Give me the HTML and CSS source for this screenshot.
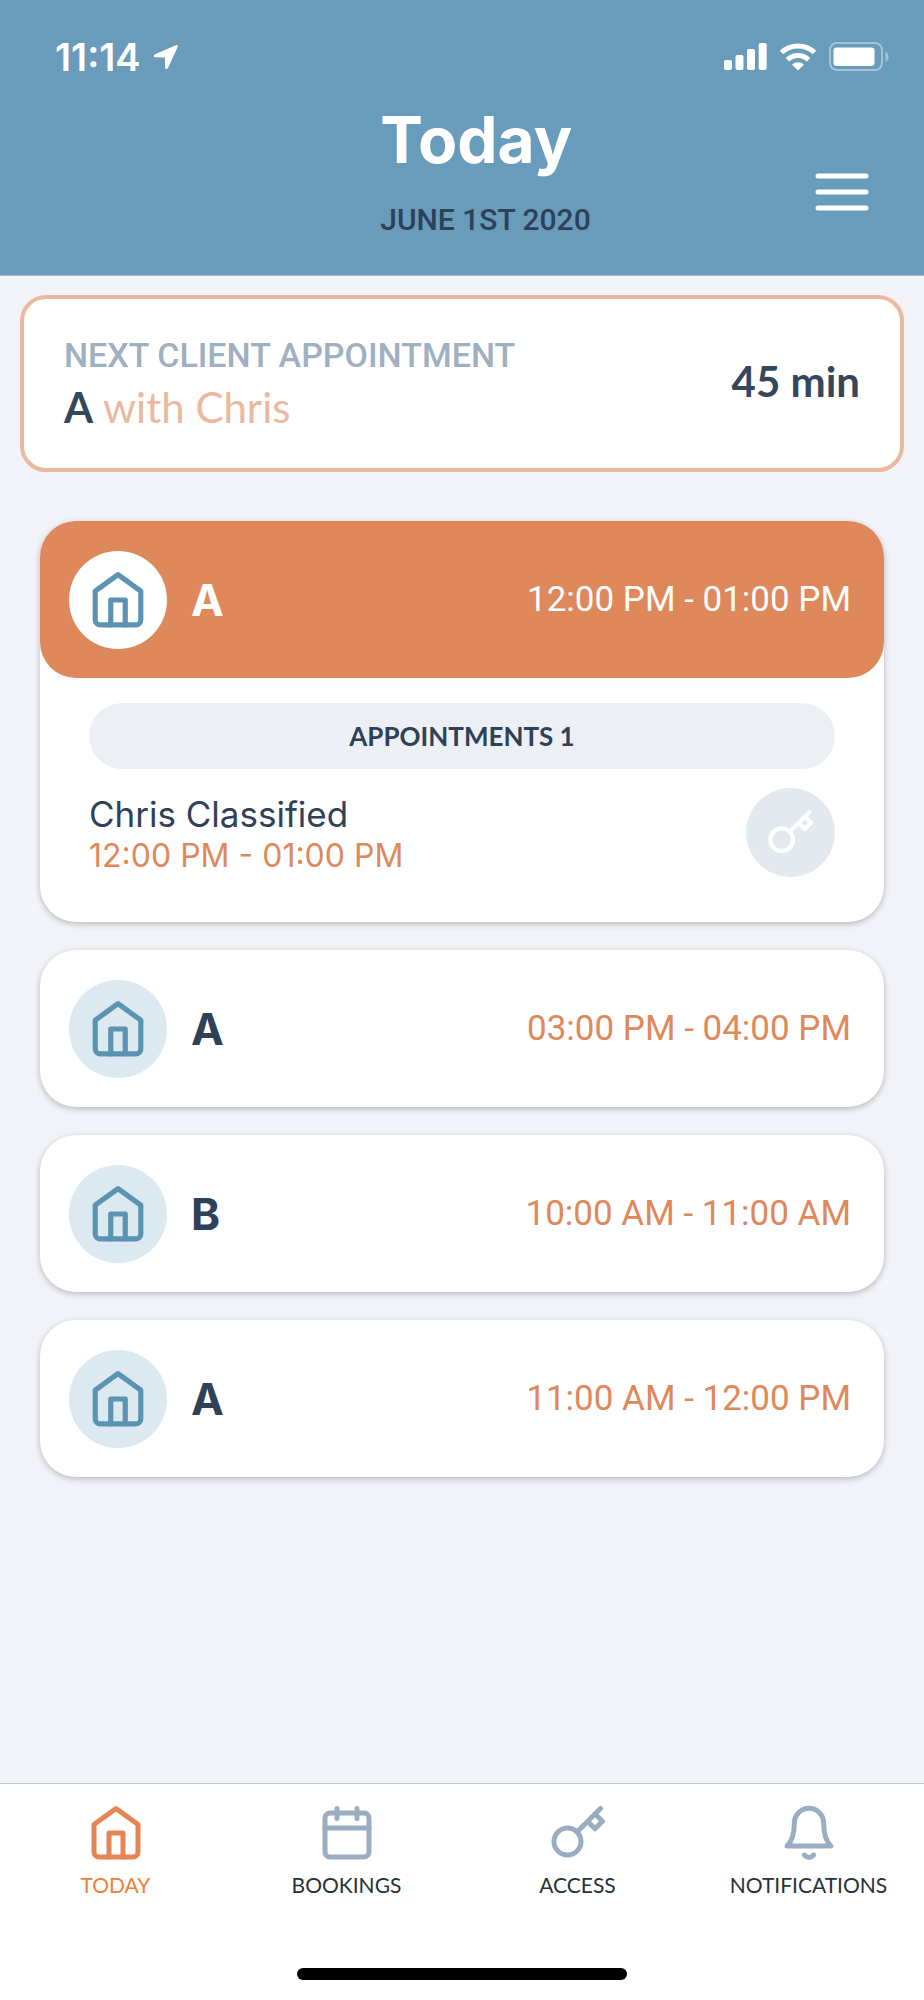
FILE: index.html
```html
<!DOCTYPE html>
<html lang="en">
<head>
    <meta charset="UTF-8">
    <meta name="viewport" content="width=device-width, initial-scale=1.0">
    <title>Today</title>
    <link rel="stylesheet" href="styles.css">
</head>
<body>
    <!-- Shared icons -->
    <svg class="icon-defs" aria-hidden="true">
        <symbol id="icon-home" viewBox="0 0 56 56">
            <path d="M28 3.5L6 19.5V47a5 5 0 0 0 5 5h34a5 5 0 0 0 5-5V19.5z"/>
            <path d="M21 52V28h14v24"/>
        </symbol>
        <symbol id="icon-calendar" viewBox="0 0 56 56">
            <rect x="6" y="8" width="44" height="44" rx="5"/>
            <path d="M6 23h44M18 3.500v10M38 3.500v10"/>
        </symbol>
        <symbol id="icon-key" viewBox="0 0 56 56">
            <circle cx="17.5" cy="36.5" r="13.5"/>
            <path d="M27 27L50.5 3.5M45 9l7.500 7.300-7.500 7.500-7.300-7.300"/>
        </symbol>
        <symbol id="icon-bell" viewBox="0 0 56 56">
            <path d="M6 41C11.500 36 13.300 29 13.300 18.500a14.700 15.200 0 0 1 29.400 0C42.700 29 44.500 36 50 41z"/>
            <path d="M23.300 50q4.700 5 9.400 0"/>
        </symbol>
    </svg>

    <header class="header">
        <div class="status-bar">
            <div class="status-left">
                <span class="clock">11:14</span>
                <svg class="location" width="26" height="26" viewBox="0 0 26 26" aria-hidden="true">
                    <path d="M23 1.200L2 10.200c-1.800.9-1.500 3 .5 3.100l9.300.3.300 9.800c.1 2 2.200 2.300 3 .4L24.700 3c.5-1.300-.4-2.300-1.700-1.800z"/>
                </svg>
            </div>
            <div class="status-right">
                <svg width="43" height="30" viewBox="0 0 43 30" aria-hidden="true">
                    <rect x="0" y="18" width="8" height="10" rx="2"/>
                    <rect x="11.5" y="13" width="8" height="15" rx="2"/>
                    <rect x="23" y="7" width="8" height="21" rx="2"/>
                    <rect x="34.7" y="1" width="8" height="27" rx="2"/>
                </svg>
                <svg width="38" height="30" viewBox="0 0 38 30" aria-hidden="true">
                    <path class="wifi-arc" d="M2.500 10.500a24 24 0 0 1 33 0M8.500 17.800a15 15 0 0 1 21 0"/>
                    <path d="M19 28.500l-6-6a9 9 0 0 1 12 0z"/>
                </svg>
                <svg width="60" height="30" viewBox="0 0 60 30" aria-hidden="true">
                    <rect class="battery-case" x="1" y="1" width="52" height="27" rx="7"/>
                    <rect x="4.5" y="5.5" width="41" height="18.5" rx="3"/>
                    <path class="battery-tip" d="M56.500 9.500c4 2.500 4 8 0 10.500z"/>
                </svg>
            </div>
        </div>
        <div class="title-bar">
            <div class="title-group">
                <h1>Today</h1>
                <p>JUNE 1ST 2020</p>
            </div>
            <button class="menu-btn" type="button" aria-label="Menu">
                <svg width="54" height="40" viewBox="0 0 54 40">
                    <path d="M3 4h48M3 20h48M3 36h48"/>
                </svg>
            </button>
        </div>
    </header>

    <main>
        <section class="next-appointment">
            <div>
                <h2>NEXT CLIENT APPOINTMENT</h2>
                <p><strong>A</strong> with Chris</p>
            </div>
            <span class="countdown">45 min</span>
        </section>

        <section class="bookings">
            <article class="card card-active">
                <div class="card-head">
                    <span class="home-badge"><svg><use href="#icon-home"/></svg></span>
                    <h3>A</h3>
                    <time>12:00 PM - 01:00 PM</time>
                </div>
                <div class="card-body">
                    <h4>APPOINTMENTS 1</h4>
                    <div class="client">
                        <div>
                            <p class="client-name">Chris Classified</p>
                            <p class="client-time">12:00 PM - 01:00 PM</p>
                        </div>
                        <button class="key-btn" type="button" aria-label="Access">
                            <svg><use href="#icon-key"/></svg>
                        </button>
                    </div>
                </div>
            </article>
            <article class="card">
                <div class="card-head">
                    <span class="home-badge"><svg><use href="#icon-home"/></svg></span>
                    <h3>A</h3>
                    <time>03:00 PM - 04:00 PM</time>
                </div>
            </article>
            <article class="card">
                <div class="card-head">
                    <span class="home-badge"><svg><use href="#icon-home"/></svg></span>
                    <h3>B</h3>
                    <time>10:00 AM - 11:00 AM</time>
                </div>
            </article>
            <article class="card">
                <div class="card-head">
                    <span class="home-badge"><svg><use href="#icon-home"/></svg></span>
                    <h3>A</h3>
                    <time>11:00 AM - 12:00 PM</time>
                </div>
            </article>
        </section>
    </main>

    <footer class="tab-bar">
        <nav>
            <a class="active" href="#"><svg><use href="#icon-home"/></svg>TODAY</a>
            <a href="#"><svg><use href="#icon-calendar"/></svg>BOOKINGS</a>
            <a href="#"><svg><use href="#icon-key"/></svg>ACCESS</a>
            <a href="#"><svg><use href="#icon-bell"/></svg>NOTIFICATIONS</a>
        </nav>
        <div class="home-indicator"></div>
    </footer>
</body>
</html>
```

FILE: styles.css
```css
/* Global Styles */
* {
    margin: 0;
    padding: 0;
    box-sizing: border-box;
}

body {
    display: flex;
    flex-direction: column;
    min-height: 100vh;
    font-family: 'Lato', sans-serif;
    background-color: #f3f4fa;
    color: #2f4158;
}

svg {
    display: block;
}

button {
    border: none;
    background: none;
    cursor: pointer;
}

.icon-defs {
    display: none;
}

symbol {
    fill: none;
    stroke: currentColor;
    stroke-width: 5;
    stroke-linecap: round;
    stroke-linejoin: round;
}

/* Header */
.header {
    background-color: #699bbb;
    border-bottom: 1px solid #a9bccd;
    padding-bottom: 35px;
    color: #fff;
}

.status-bar {
    display: flex;
    justify-content: space-between;
    align-items: center;
    height: 100px;
    padding: 14px 35px 0 55px;
    fill: #fff;
}

.status-left,
.status-right {
    display: flex;
    align-items: center;
    gap: 12px;
}

.clock {
    font: 600 38px/40px 'Inter', sans-serif;
}

.wifi-arc {
    fill: none;
    stroke: #fff;
    stroke-width: 5;
}

.battery-case {
    fill: none;
    stroke: #a5c3d6;
    stroke-width: 2;
}

.battery-tip {
    fill: #a5c3d6;
}

.title-bar {
    display: grid;
    grid-template-columns: 1fr auto 1fr;
    padding: 0 55px 0 102px;
}

.title-group {
    grid-column: 2;
}

.title-group h1 {
    font: 700 64px/80px 'Inter', sans-serif;
}

.title-group p {
    margin-top: 20px;
    font: 500 30px/40px 'Roboto', sans-serif;
    color: #2f4158;
}

.menu-btn {
    align-self: end;
    justify-self: end;
    margin-bottom: 28px;
}

.menu-btn path {
    fill: none;
    stroke: #fff;
    stroke-width: 5;
    stroke-linecap: round;
}

/* Next Appointment */
.next-appointment {
    display: flex;
    justify-content: space-between;
    align-items: center;
    margin: 19px 20px 0;
    padding: 30px 40px 35px;
    border: 4px solid #ebb8a0;
    border-radius: 26px;
    background-color: #fff;
}

.next-appointment h2 {
    font: 500 34px/52px 'Roboto', sans-serif;
    color: #9fb0c2;
}

.next-appointment p {
    font-size: 42px;
    line-height: 52px;
    color: #ebb8a0;
}

.next-appointment strong {
    color: #35475c;
}

.countdown {
    font-size: 42px;
    font-weight: 700;
    color: #35475c;
}

/* Booking Cards */
.bookings {
    display: flex;
    flex-direction: column;
    gap: 28px;
    padding: 49px 40px 60px;
}

.card {
    border-radius: 36px;
    background-color: #fff;
    box-shadow: 0 2px 6px rgba(0, 0, 0, 0.25);
}

.card-head {
    display: flex;
    align-items: center;
    height: 157px;
    padding: 0 33px 0 29px;
    border-radius: 36px;
}

.card-active .card-head {
    background-color: #de885b;
    color: #fff;
}

.home-badge {
    display: flex;
    align-items: center;
    justify-content: center;
    width: 98px;
    height: 98px;
    margin-right: 24px;
    border-radius: 50%;
    background-color: #dce9f1;
    color: #5b93b3;
}

.card-active .home-badge {
    background-color: #fff;
}

.home-badge svg {
    width: 58px;
    height: 58px;
}

.card-head h3 {
    font: 700 44px/52px 'Inter', sans-serif;
}

.card-head time {
    margin-left: auto;
    font: 400 35px/52px 'Roboto', sans-serif;
    color: #de885b;
}

.card-active .card-head time {
    color: #fff;
}

.card-body {
    padding: 25px 49px 45px;
}

.card-body h4 {
    height: 66px;
    border-radius: 33px;
    background-color: #ecf0f5;
    font-size: 26px;
    line-height: 66px;
    text-align: center;
}

.client {
    display: flex;
    justify-content: space-between;
    align-items: flex-end;
    margin-top: 19px;
    font-family: 'Inter', sans-serif;
    line-height: 42px;
}

.client-name {
    font-size: 35px;
}

.client-time {
    font-size: 32px;
    color: #de885b;
}

.key-btn {
    display: flex;
    align-items: center;
    justify-content: center;
    width: 89px;
    height: 89px;
    border-radius: 50%;
    background-color: #e3e9ee;
    color: #fff;
}

.key-btn svg {
    width: 47px;
    height: 47px;
}

/* Tab Bar */
.tab-bar {
    margin-top: auto;
    padding: 21px 0 20px;
    border-top: 1px solid #c4c5c9;
    background-color: #fff;
}

.tab-bar nav {
    display: grid;
    grid-template-columns: repeat(4, 1fr);
}

.tab-bar a {
    display: flex;
    flex-direction: column;
    align-items: center;
    gap: 10px;
    font-size: 21px;
    line-height: 28px;
    color: #263238;
    text-decoration: none;
}

.tab-bar svg {
    width: 56px;
    height: 56px;
    color: #9badc2;
}

.tab-bar .active {
    color: #f08034;
}

.tab-bar .active svg {
    color: #e68454;
}

.home-indicator {
    width: 330px;
    height: 12px;
    margin: 69px auto 0;
    border-radius: 6px;
    background-color: #000;
}
```
